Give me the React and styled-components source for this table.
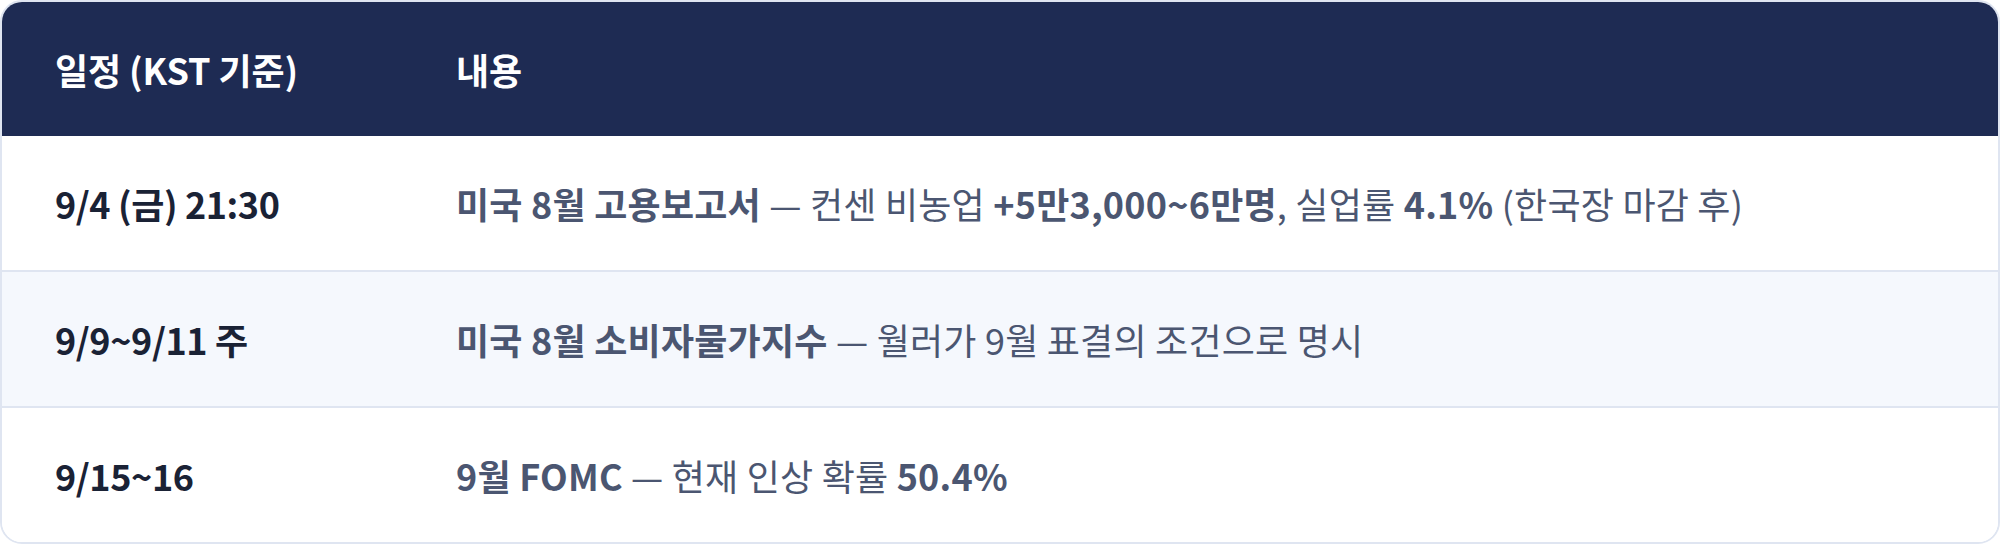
import React from "react";
import styled, { createGlobalStyle } from "styled-components";

const Global = createGlobalStyle`
  html, body { margin: 0; padding: 0; background: #ffffff; }
  body { font-family: "Noto Sans CJK KR", "Noto Sans", sans-serif; }
  * { box-sizing: border-box; }
`;

const Card = styled.div`
  width: 2000px;
  height: 544px;
  border: 2px solid #dfe5f1;
  border-radius: 22px;
  overflow: hidden;
  background: #ffffff;
  display: flex;
  flex-direction: column;
`;

const Row = styled.div`
  display: grid;
  grid-template-columns: 401px 1fr;
  align-items: center;
  height: ${(p) => (p.$last || p.$head ? "134px" : "136px")};
  background: ${(p) => (p.$head ? "#1e2b53" : p.$alt ? "#f5f8fd" : "#ffffff")};
  border-bottom: ${(p) => (p.$head || p.$last ? "none" : "2px solid #dfe5f1")};
`;

const HeadCell = styled.div`
  padding-left: 53px;
  color: #ffffff;
  font-size: 36px;
  font-weight: 700;
  letter-spacing: -0.1px;
  white-space: nowrap;
`;

const DateCell = styled.div`
  padding-left: 53px;
  color: #1a2235;
  font-size: 36px;
  font-weight: 700;
  letter-spacing: -0.4px;
  white-space: nowrap;
`;

const ContentCell = styled.div`
  padding-left: 53px;
  color: #4b5671;
  font-size: 36px;
  font-weight: 400;
  letter-spacing: 0.22px;
  white-space: nowrap;
`;

const B = styled.strong`
  font-weight: 700;
`;

export default function App() {
  return (
    <>
      <Global />
      <Card>
        <Row $head>
          <HeadCell>일정 (KST 기준)</HeadCell>
          <HeadCell>내용</HeadCell>
        </Row>
        <Row>
          <DateCell>9/4 (금) 21:30</DateCell>
          <ContentCell>
            <B>미국 8월 고용보고서</B> — 컨센 비농업 <B>+5만3,000~6만명</B>, 실업률 <B>4.1%</B> (한국장 마감 후)
          </ContentCell>
        </Row>
        <Row $alt>
          <DateCell>9/9~9/11 주</DateCell>
          <ContentCell>
            <B>미국 8월 소비자물가지수</B> — 월러가 9월 표결의 조건으로 명시
          </ContentCell>
        </Row>
        <Row $last>
          <DateCell>9/15~16</DateCell>
          <ContentCell>
            <B>9월 FOMC</B> — 현재 인상 확률 <B>50.4%</B>
          </ContentCell>
        </Row>
      </Card>
    </>
  );
}
